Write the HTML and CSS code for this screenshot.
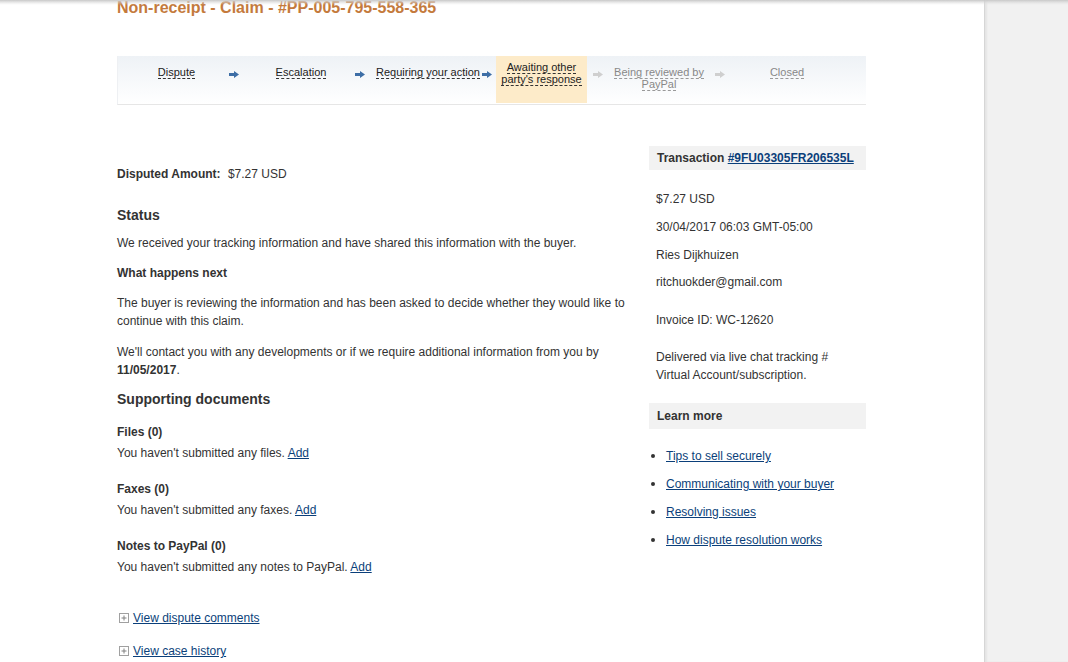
FILE: index.html
```html
<!DOCTYPE html>
<html lang="en">
<head>
    <meta charset="UTF-8">
    <title>Non-receipt - Claim - #PP-005-795-558-365</title>
    <link rel="stylesheet" href="styles.css">
</head>
<body>
    <div class="top-shadow"></div>
    <div class="page">
        <div class="main">
            <div class="container">
                <h1 class="title">Non-receipt - Claim - #PP-005-795-558-365</h1>

                <div class="steps">
                    <div class="step step-1"><span class="label">Dispute</span></div>
                    <svg class="arrow" width="10" height="7" viewBox="0 0 10 7"><path d="M0 2h5V0l5 3.5L5 7V5H0z" fill="#3d6ea6"/></svg>
                    <div class="step step-2"><span class="label">Escalation</span></div>
                    <svg class="arrow" width="10" height="7" viewBox="0 0 10 7"><path d="M0 2h5V0l5 3.5L5 7V5H0z" fill="#3d6ea6"/></svg>
                    <div class="step step-3"><span class="label">Requiring your action</span></div>
                    <svg class="arrow" width="10" height="7" viewBox="0 0 10 7"><path d="M0 2h5V0l5 3.5L5 7V5H0z" fill="#3d6ea6"/></svg>
                    <div class="step active"><span class="label">Awaiting other party's response</span></div>
                    <svg class="arrow arrow-gap" width="10" height="7" viewBox="0 0 10 7"><path d="M0 2h5V0l5 3.5L5 7V5H0z" fill="#cfcfcf"/></svg>
                    <div class="step step-5 future"><span class="label">Being reviewed by PayPal</span></div>
                    <svg class="arrow" width="10" height="7" viewBox="0 0 10 7"><path d="M0 2h5V0l5 3.5L5 7V5H0z" fill="#cfcfcf"/></svg>
                    <div class="step step-6 future"><span class="label">Closed</span></div>
                </div>

                <div class="content">
                    <div class="left">
                        <p class="amount"><strong>Disputed Amount:</strong> <span class="amount-value">$7.27 USD</span></p>

                        <h2 class="status-title">Status</h2>
                        <p class="m10">We received your tracking information and have shared this information with the buyer.</p>
                        <p class="m12"><strong>What happens next</strong></p>
                        <p class="m12">The buyer is reviewing the information and has been asked to decide whether they would like to continue with this claim.</p>
                        <p class="m13">We'll contact you with any developments or if we require additional information from you by <strong>11/05/2017</strong>.</p>

                        <h2 class="docs-title">Supporting documents</h2>
                        <p class="m15"><strong>Files (0)</strong></p>
                        <p class="m3">You haven't submitted any files. <a href="#">Add</a></p>
                        <p class="m18"><strong>Faxes (0)</strong></p>
                        <p class="m3">You haven't submitted any faxes. <a href="#">Add</a></p>
                        <p class="m18"><strong>Notes to PayPal (0)</strong></p>
                        <p class="m3">You haven't submitted any notes to PayPal. <a href="#">Add</a></p>

                        <p class="toggle toggle-first">
                            <svg class="plus" width="10" height="10" viewBox="0 0 10 10"><rect x="0.5" y="0.5" width="9" height="9" fill="#fff" stroke="#a0a0a0"/><path d="M2.5 5h5M5 2.5v5" stroke="#808080"/></svg>
                            <a href="#">View dispute comments</a>
                        </p>
                        <p class="toggle toggle-second">
                            <svg class="plus" width="10" height="10" viewBox="0 0 10 10"><rect x="0.5" y="0.5" width="9" height="9" fill="#fff" stroke="#a0a0a0"/><path d="M2.5 5h5M5 2.5v5" stroke="#808080"/></svg>
                            <a href="#">View case history</a>
                        </p>
                    </div>

                    <div class="right">
                        <div class="box-title">Transaction <a href="#">#9FU03305FR206535L</a></div>
                        <p class="side-line m20">$7.27 USD</p>
                        <p class="side-line m10">30/04/2017 06:03 GMT-05:00</p>
                        <p class="side-line m10">Ries Dijkhuizen</p>
                        <p class="side-line m9">ritchuokder@gmail.com</p>
                        <p class="side-line m20">Invoice ID: WC-12620</p>
                        <p class="side-line m19">Delivered via live chat tracking # Virtual Account/subscription.</p>

                        <div class="box-title learn">Learn more</div>
                        <ul class="links">
                            <li><a href="#">Tips to sell securely</a></li>
                            <li><a href="#">Communicating with your buyer</a></li>
                            <li><a href="#">Resolving issues</a></li>
                            <li><a href="#">How dispute resolution works</a></li>
                        </ul>
                    </div>
                </div>
            </div>
        </div>
        <div class="gutter"></div>
    </div>
</body>
</html>
```

FILE: styles.css
```css
body {
    margin: 0;
    font-family: "Liberation Sans", Arial, sans-serif;
    font-size: 12px;
    line-height: 18px;
    color: #333;
    background: #fff;
    overflow: hidden;
}
p, h1, h2, ul {
    margin: 0;
}
a {
    color: #0b3f7a;
    text-decoration: underline;
}
.top-shadow {
    position: fixed;
    top: 0;
    left: 0;
    right: 0;
    height: 5px;
    background: linear-gradient(#c9c9c9, rgba(220,220,220,0.4) 60%, rgba(255,255,255,0));
}
.page {
    display: flex;
    min-height: 662px;
}
.main {
    width: 984px;
    background: #fff;
}
.gutter {
    flex: 1;
    background: #f1f1f1;
    border-left: 1px solid #d6d6d6;
    box-shadow: inset 2px 0 2px rgba(0,0,0,0.05);
}
.container {
    margin-left: 117px;
    width: 749px;
}
.title {
    margin-top: -2px;
    font-size: 16px;
    line-height: 20px;
    font-weight: bold;
    color: #c47a3c;
}

/* steps bar */
.steps {
    margin-top: 38px;
    height: 48px;
    display: flex;
    align-items: flex-start;
    border-left: 1px solid #eef0f3;
    border-bottom: 1px solid #e6e6e6;
    background: linear-gradient(#eef2f6, #ffffff);
    font-size: 11px;
    line-height: 12px;
}
.step {
    text-align: center;
    padding-top: 10px;
    box-sizing: border-box;
}
.step .label {
    color: #222;
    border-bottom: 1px dashed #333;
}
.step.future .label {
    color: #888;
    border-bottom-color: #999;
}
.step-1 {
    width: 111px;
    padding-left: 6px;
}
.step-2 {
    width: 116px;
    padding-left: 8px;
}
.step-3 {
    width: 117px;
    padding-left: 9px;
}
.step.active {
    width: 91px;
    height: 47px;
    margin-left: 4px;
    padding: 5px 2px 0;
    background: #fdebc9;
}
.step-5 {
    width: 112px;
    padding: 10px 8px 0;
}
.step-6 {
    width: 120px;
    padding-left: 4px;
}
.arrow {
    margin-top: 15px;
    flex-shrink: 0;
}
.arrow-gap {
    margin-left: 6px;
}

/* two columns */
.content {
    display: flex;
    margin-top: 41px;
}
.left {
    width: 518px;
    padding-top: 19px;
}
.right {
    width: 217px;
    margin-left: 14px;
}
.amount-value {
    margin-left: 4px;
}
h2 {
    font-size: 14px;
    line-height: 18px;
    font-weight: bold;
}
.status-title {
    margin-top: 23px;
}
.docs-title {
    margin-top: 11px;
}
.m3 { margin-top: 3px; }
.m9 { margin-top: 9px; }
.m10 { margin-top: 10px; }
.m12 { margin-top: 12px; }
.m13 { margin-top: 13px; }
.m15 { margin-top: 15px; }
.m18 { margin-top: 18px; }
.m19 { margin-top: 19px; }
.m20 { margin-top: 20px; }

.toggle {
    display: flex;
    align-items: center;
    gap: 4px;
    padding-left: 2px;
}
.toggle-first {
    margin-top: 33px;
}
.toggle-second {
    margin-top: 15px;
}
.plus {
    flex-shrink: 0;
}

/* side boxes */
.box-title {
    background: #f2f2f2;
    line-height: 24px;
    padding: 0 8px;
    font-weight: bold;
    color: #333;
}
.box-title.learn {
    margin-top: 19px;
    line-height: 26px;
}
.side-line {
    padding: 0 12px 0 7px;
}
.links {
    list-style: none;
    padding: 0;
    margin-top: 18px;
}
.links li {
    display: flex;
    align-items: center;
    margin-bottom: 10px;
}
.links li::before {
    content: "";
    width: 4px;
    height: 4px;
    border-radius: 50%;
    background: #333;
    margin: 0 11px 0 2px;
}
```
